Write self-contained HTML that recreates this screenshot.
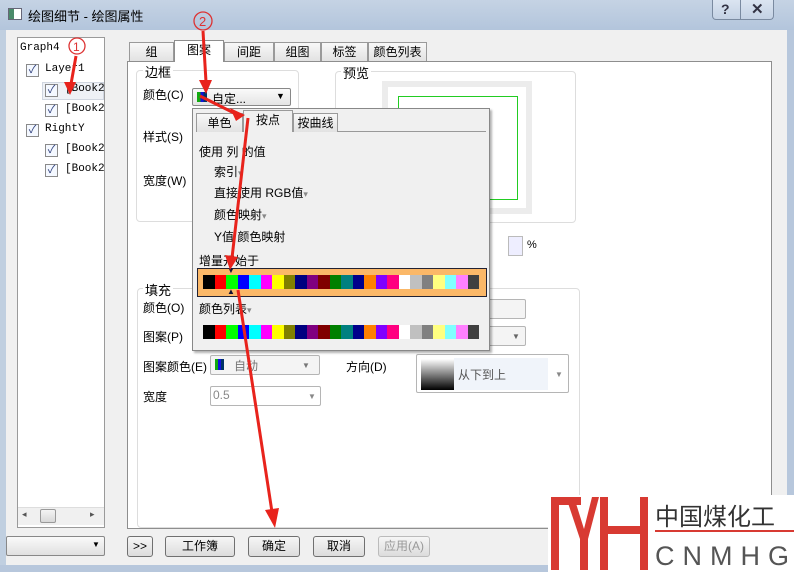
<!DOCTYPE html>
<html><head><meta charset="utf-8"><style>
*{margin:0;padding:0;box-sizing:border-box}
body{width:794px;height:572px;overflow:hidden;background:#f0f0f0;font-family:"Liberation Sans","Noto Sans CJK SC",sans-serif;font-size:12px;color:#000;position:relative}
.a{position:absolute}
.t{position:absolute;white-space:nowrap;font-size:12px}
.cb{position:absolute;width:13px;height:13px;border:1px solid #8a8a8a;background:#f4f8ff;font-size:11px;line-height:11px;text-align:center;color:#2a3c7a}
.btn{position:absolute;height:21px;border:1px solid #707070;border-radius:3px;background:linear-gradient(#f6f6f6,#dcdcdc);text-align:center;line-height:19px;font-size:12px}
.tab{position:absolute;height:19px;border:1px solid #9a9a9a;border-bottom:none;background:linear-gradient(#f8f8f8,#e2e2e2);text-align:center;line-height:18px}
.sw{display:inline-block;width:11.5px;height:14px;vertical-align:top}
.dd{position:absolute;border:1px solid #b5b5b5;border-radius:2px;background:#f4f4f4}
</style></head><body>
<div class="a" style="left:0;top:0;width:794px;height:30px;background:linear-gradient(#c5d3e4,#b3c5dc);"></div>
<div class="a" style="left:8px;top:8px;width:14px;height:12px;background:#fff;border:1px solid #667"><div style="width:5px;height:10px;background:#4a8a6a"></div></div>
<div class="t" style="left:28px;top:6px;font-size:13px">绘图细节 - 绘图属性</div>
<div class="a" style="left:712px;top:0;width:62px;height:20px;border:1px solid #7a8aa0;border-top:none;border-radius:0 0 4px 4px;background:linear-gradient(#dbe5f1,#c4d2e4)"></div>
<div class="a" style="left:740px;top:0;width:1px;height:20px;background:#7a8aa0"></div>
<div class="t" style="left:721px;top:1px;font-size:14px;font-weight:bold;color:#334">?</div>
<div class="t" style="left:751px;top:0px;font-size:15px;font-weight:bold;color:#334">✕</div>
<div class="a" style="left:787px;top:30px;width:7px;height:542px;background:#b7c7dc"></div>
<div class="a" style="left:0;top:565px;width:794px;height:7px;background:#b7c7dc"></div>
<div class="a" style="left:0;top:30px;width:6px;height:535px;background:#c0cfe0"></div>

<div class="a" style="left:17px;top:37px;width:88px;height:491px;background:#fff;border:1px solid #9a9a9a"></div>
<div class="t" style="left:20px;top:42px;font-family:'Liberation Mono',monospace;font-size:11px">Graph4</div>
<div class="cb" style="left:26px;top:64px">✓</div><div class="t" style="left:45px;top:63px;font-family:'Liberation Mono',monospace;font-size:11px">Layer1</div>
<div class="a" style="left:42px;top:82px;width:62px;height:18px;background:#eef1f6;border:1px solid #d0d6e0"></div>
<div class="cb" style="left:45px;top:84px">✓</div><div class="t" style="left:65px;top:83px;font-family:'Liberation Mono',monospace;font-size:11px">[Book2</div>
<div class="cb" style="left:45px;top:104px">✓</div><div class="t" style="left:65px;top:103px;font-family:'Liberation Mono',monospace;font-size:11px">[Book2</div>
<div class="cb" style="left:26px;top:124px">✓</div><div class="t" style="left:45px;top:123px;font-family:'Liberation Mono',monospace;font-size:11px">RightY</div>
<div class="cb" style="left:45px;top:144px">✓</div><div class="t" style="left:65px;top:143px;font-family:'Liberation Mono',monospace;font-size:11px">[Book2</div>
<div class="cb" style="left:45px;top:164px">✓</div><div class="t" style="left:65px;top:163px;font-family:'Liberation Mono',monospace;font-size:11px">[Book2</div>
<div class="a" style="left:18px;top:507px;width:86px;height:18px;background:#f0f0f0;border-top:1px solid #ddd"></div>
<div class="a" style="left:40px;top:509px;width:16px;height:14px;background:linear-gradient(#f4f4f4,#d8d8d8);border:1px solid #999;border-radius:2px"></div>
<div class="t" style="left:22px;top:509px;font-size:9px;color:#555">◂</div><div class="t" style="left:90px;top:509px;font-size:9px;color:#555">▸</div>
<div class="dd" style="left:6px;top:536px;width:99px;height:20px;background:linear-gradient(#fafafa,#e0e0e0);border-color:#888"></div>
<div class="t" style="left:92px;top:540px;font-size:8px">▼</div>

<div class="a" style="left:127px;top:61px;width:645px;height:468px;background:#fff;border:1px solid #8e8e8e"></div>
<div class="tab" style="left:129px;top:42px;width:45px">组</div>
<div class="tab" style="left:174px;top:40px;width:50px;height:22px;background:#fff;border-color:#8e8e8e">图案</div>
<div class="tab" style="left:224px;top:42px;width:50px">间距</div>
<div class="tab" style="left:274px;top:42px;width:47px">组图</div>
<div class="tab" style="left:321px;top:42px;width:47px">标签</div>
<div class="tab" style="left:368px;top:42px;width:59px">颜色列表</div>

<div class="a" style="left:136px;top:70px;width:163px;height:152px;border:1px solid #ddd;border-radius:4px"></div>
<div class="t" style="left:143px;top:62px;background:#fff;padding:0 2px;font-size:13px">边框</div>
<div class="t" style="left:143px;top:86px">颜色(C)</div>
<div class="t" style="left:143px;top:128px">样式(S)</div>
<div class="t" style="left:143px;top:172px">宽度(W)</div>
<div class="dd" style="left:192px;top:88px;width:99px;height:18px;border-color:#888;background:linear-gradient(#fafafa,#e4e4e4)"></div>
<div class="a" style="left:197px;top:92px;width:10px;height:10px;background:linear-gradient(90deg,#1a1 0 33%,#11d 33% 66%,#036 66%)"></div>
<div class="t" style="left:212px;top:90px">自定...</div>
<div class="t" style="left:276px;top:91px;font-size:9px">▼</div>
<div class="a" style="left:335px;top:71px;width:241px;height:152px;border:1px solid #ddd;border-radius:4px"></div>
<div class="t" style="left:341px;top:63px;background:#fff;padding:0 2px;font-size:13px">预览</div>
<div class="a" style="left:382px;top:81px;width:150px;height:133px;border:6px solid #ececec"></div>
<div class="a" style="left:398px;top:96px;width:120px;height:104px;border:1px solid #2c2"></div>
<div class="a" style="left:508px;top:236px;width:15px;height:20px;border:1px solid #bbb;background:#eef"></div>
<div class="t" style="left:527px;top:239px;font-size:11px">%</div>

<div class="a" style="left:137px;top:288px;width:443px;height:240px;border:1px solid #ddd;border-radius:4px"></div>
<div class="t" style="left:143px;top:280px;background:#fff;padding:0 2px;font-size:13px">填充</div>
<div class="t" style="left:143px;top:299px">颜色(O)</div>
<div class="t" style="left:143px;top:328px">图案(P)</div>
<div class="dd" style="left:480px;top:299px;width:46px;height:20px"></div>
<div class="dd" style="left:480px;top:326px;width:46px;height:20px"></div>
<div class="t" style="left:512px;top:332px;font-size:8px;color:#666">▼</div>
<div class="t" style="left:143px;top:358px">图案颜色(E)</div>
<div class="dd" style="left:210px;top:355px;width:110px;height:20px"></div>
<div class="a" style="left:215px;top:359px;width:9px;height:11px;background:linear-gradient(90deg,#1a1 0 33%,#11d 33% 66%,#036 66%)"></div>
<div class="t" style="left:234px;top:357px;color:#777">自动</div>
<div class="t" style="left:302px;top:361px;font-size:8px;color:#777">▼</div>
<div class="t" style="left:346px;top:358px">方向(D)</div>
<div class="dd" style="left:416px;top:354px;width:153px;height:39px;background:#fff"></div>
<div class="a" style="left:421px;top:359px;width:33px;height:31px;background:linear-gradient(#fff,#000)"></div>
<div class="a" style="left:454px;top:358px;width:94px;height:32px;background:#f0f4fa"></div>
<div class="t" style="left:458px;top:366px;color:#555">从下到上</div>
<div class="t" style="left:555px;top:370px;font-size:8px;color:#888">▼</div>
<div class="t" style="left:143px;top:388px">宽度</div>
<div class="dd" style="left:210px;top:386px;width:111px;height:20px;background:#fff"></div>
<div class="t" style="left:213px;top:388px;color:#888">0.5</div>
<div class="t" style="left:308px;top:392px;font-size:8px;color:#888">▼</div>

<div class="a" style="left:192px;top:108px;width:298px;height:243px;background:#f0f0f0;border:1px solid #888;box-shadow:2px 2px 2px rgba(0,0,0,.3)"></div>
<div class="a" style="left:197px;top:131px;width:289px;height:1px;background:#999"></div>
<div class="tab" style="left:196px;top:113px;width:47px">单色</div>
<div class="tab" style="left:243px;top:110px;width:50px;height:22px;background:#f0f0f0">按点</div>
<div class="tab" style="left:293px;top:113px;width:45px">按曲线</div>
<div class="t" style="left:199px;top:143px">使用 列 的值</div>
<div class="t" style="left:214px;top:163px">索引<span style="color:#888;font-size:9px">▾</span></div>
<div class="t" style="left:214px;top:184px">直接使用 RGB值<span style="color:#888;font-size:9px">▾</span></div>
<div class="t" style="left:214px;top:206px">颜色映射<span style="color:#888;font-size:9px">▾</span></div>
<div class="t" style="left:214px;top:228px">Y值 颜色映射</div>
<div class="t" style="left:199px;top:252px">增量开始于</div>
<div class="a" style="left:197px;top:268px;width:290px;height:29px;background:#fbb868;border:1px solid #223"></div>
<div class="a" style="left:203px;top:275px;width:280px;height:14px;white-space:nowrap;font-size:0" id="r1"></div>
<div class="t" style="left:227px;top:266px;font-size:8px;color:#113">▼</div>
<div class="t" style="left:227px;top:287px;font-size:8px;color:#113">▲</div>
<div class="t" style="left:199px;top:300px">颜色列表<span style="color:#888;font-size:9px">▾</span></div>
<div class="a" style="left:203px;top:325px;width:280px;height:14px;white-space:nowrap;font-size:0" id="r2"></div>

<div class="btn" style="left:127px;top:536px;width:26px">&gt;&gt;</div>
<div class="btn" style="left:165px;top:536px;width:70px">工作簿</div>
<div class="btn" style="left:248px;top:536px;width:52px">确定</div>
<div class="btn" style="left:313px;top:536px;width:52px">取消</div>
<div class="btn" style="left:378px;top:536px;width:52px;color:#999;border-color:#bbb">应用(A)</div>

<div class="a" style="left:548px;top:495px;width:246px;height:77px;background:#fff"></div>
<svg class="a" style="left:548px;top:495px" width="246" height="77">
<path d="M3 2h8v73H3z M3 2h30v8H3z M18 2h8l10 32 8-32h7L40 44v31h-8V44z" fill="#d83a32"/>
<path d="M52 2h8v73h-8z M92 2h8v73h-8z M52 31h48v8H52z" fill="#d83a32"/>
<text x="107" y="30" font-size="24" fill="#333" font-family="Noto Sans CJK SC,sans-serif">中国煤化工</text>
<rect x="107" y="35" width="139" height="2" fill="#d83a32"/>
<text x="107" y="70" font-size="27" fill="#555" font-family="Liberation Sans,sans-serif" letter-spacing="8">CNMHG</text>
</svg>

<svg class="a" style="left:0;top:0" width="794" height="572">
<circle cx="77" cy="46" r="8" fill="none" stroke="#d33" stroke-width="1.3"/><text x="73" y="51" font-size="12" fill="#d33">1</text>
<circle cx="203" cy="21" r="9" fill="none" stroke="#d33" stroke-width="1.3"/><text x="199" y="26" font-size="13" fill="#d33">2</text>
<g stroke="#e8231c" stroke-width="3" fill="#e8231c">
<line x1="76" y1="56" x2="71" y2="84"/><polygon points="64,82 76,82 70,95" stroke="none"/>
<line x1="203" y1="31" x2="206" y2="82"/><polygon points="199,80 212,80 206,94" stroke="none"/>
<line x1="200" y1="96" x2="236" y2="114"/><polygon points="230,108 236,121 245,115" stroke="none"/>
<line x1="248" y1="118" x2="232" y2="258"/><polygon points="225,255 238,257 230,270" stroke="none"/>
<line x1="238" y1="290" x2="272" y2="512"/><polygon points="265,510 279,508 275,528" stroke="none"/>
</g></svg>
<script>
var c=["#000","#f00","#0f0","#00f","#0ff","#f0f","#ff0","#808000","#000080","#800080","#800000","#008000","#008080","#00008b","#ff8000","#8000ff","#ff0080","#fff","#c0c0c0","#808080","#ffff80","#80ffff","#ff80ff","#404040"];
["r1","r2"].forEach(function(id){var h="";c.forEach(function(x){h+='<span class="sw" style="background:'+x+'"></span>'});document.getElementById(id).innerHTML=h;});
</script>
</body></html>
